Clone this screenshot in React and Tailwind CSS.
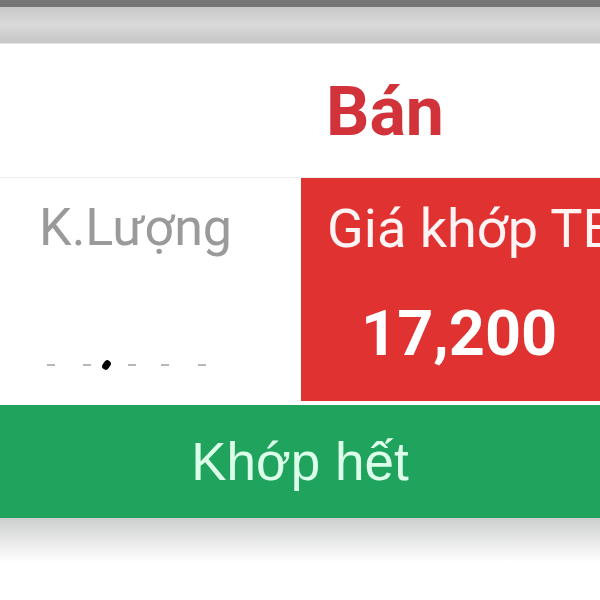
import React from "react";

const App = () => {
  return (
    <div className="w-[600px] h-[600px] overflow-hidden bg-white" style={{ fontFamily: "Roboto, 'Liberation Sans', sans-serif" }}>
      <div className="h-[7px] bg-[#767676]" />
      <div className="h-[37px] bg-gradient-to-b from-[#c9c9c9] via-[#d9d9d9] to-[#c6c6c6] border-b border-[#e4e4e4]" />

      <div className="h-[133px] flex items-center pl-[326px]">
        <span className="text-[68px] font-bold text-[#d2323a] leading-none mt-[2px]">Bán</span>
      </div>
      <div className="h-px bg-[#ececec]" />

      <div className="flex h-[223px]">
        <div className="w-[301px] flex flex-col pl-[39px] pt-[24px]">
          <span className="text-[52px] text-[#9a9a9a] leading-none">K.Lượng</span>
          <div className="flex items-center mt-[106px]">
            <span className="ml-[8px] w-[8px] h-[2px] bg-[#b8b8b8]" />
            <span className="ml-[28px] w-[8px] h-[2px] bg-[#b8b8b8]" />
            <span className="ml-[12px] w-[7px] h-[10px] rounded-full bg-black rotate-[35deg]" />
            <span className="ml-[18px] w-[8px] h-[2px] bg-[#b8b8b8]" />
            <span className="ml-[25px] w-[8px] h-[2px] bg-[#b8b8b8]" />
            <span className="ml-[29px] w-[8px] h-[2px] bg-[#b8b8b8]" />
          </div>
        </div>
        <div className="flex-1 bg-[#e13232] flex flex-col overflow-hidden pt-[24px]">
          <span className="text-[54px] text-[#fff3f3] leading-none whitespace-nowrap pl-[26px]">Giá khớp TB</span>
          <span className="text-[63px] font-bold text-white leading-none mt-[46px] pl-[60px]">17,200</span>
        </div>
      </div>

      <div className="h-[4px]" />
      <div className="h-[113px] bg-[#1fa35d] flex items-center justify-center">
        <span className="text-[53px] text-[#dcffea] leading-none" style={{ fontFamily: "'Liberation Sans', Arial, sans-serif" }}>Khớp hết</span>
      </div>
      <div className="h-[44px] bg-gradient-to-b from-[#cdd0ce] to-white" />
    </div>
  );
};

export default App;
